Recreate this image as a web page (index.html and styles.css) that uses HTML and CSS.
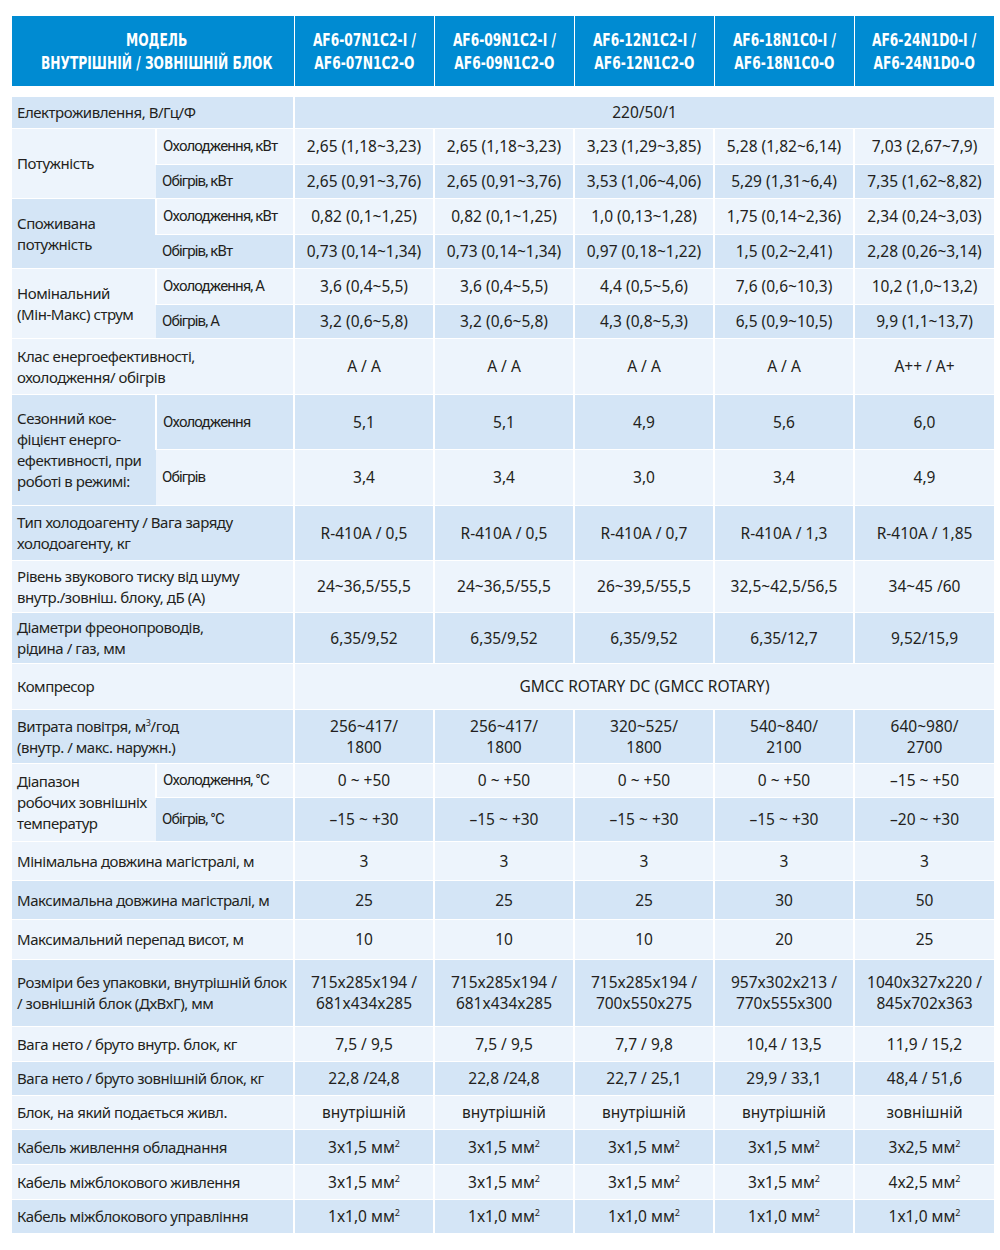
FILE: index.html
```html
<!DOCTYPE html>
<html lang="uk">
<head>
<meta charset="utf-8">
<title>Специфікація</title>
<link rel="stylesheet" href="styles.css">
</head>
<body>
<div class="wrap">
<table class="spec head">
  <colgroup><col class="c1"><col class="c2"><col class="cm"><col class="cm"><col class="cm"><col class="cm"><col class="cm"></colgroup>
  <tr class="hrow">
    <th colspan="2"><span class="hx">МОДЕЛЬ<br>ВНУТРІШНІЙ / ЗОВНІШНІЙ БЛОК</span></th>
    <th><span class="hx">AF6-07N1C2-I /<br>AF6-07N1C2-O</span></th>
    <th><span class="hx">AF6-09N1C2-I /<br>AF6-09N1C2-O</span></th>
    <th><span class="hx">AF6-12N1C2-I /<br>AF6-12N1C2-O</span></th>
    <th><span class="hx">AF6-18N1C0-I /<br>AF6-18N1C0-O</span></th>
    <th><span class="hx">AF6-24N1D0-I /<br>AF6-24N1D0-O</span></th>
  </tr>
</table>
<table class="spec body">
  <colgroup><col class="c1"><col class="c2"><col class="cm"><col class="cm"><col class="cm"><col class="cm"><col class="cm"></colgroup>
  <tr class="d h31"><td class="lab" colspan="2">Електроживлення, В/Гц/Ф</td><td colspan="5">220/50/1</td></tr>

  <tr class="l h36"><td class="lab l" rowspan="2">Потужність</td><td class="sub">Охолодження, кВт</td><td>2,65 (1,18~3,23)</td><td>2,65 (1,18~3,23)</td><td>3,23 (1,29~3,85)</td><td>5,28 (1,82~6,14)</td><td>7,03 (2,67~7,9)</td></tr>
  <tr class="d h34"><td class="sub">Обігрів, кВт</td><td>2,65 (0,91~3,76)</td><td>2,65 (0,91~3,76)</td><td>3,53 (1,06~4,06)</td><td>5,29 (1,31~6,4)</td><td>7,35 (1,62~8,82)</td></tr>

  <tr class="l h36"><td class="lab d" rowspan="2">Споживана<br>потужність</td><td class="sub">Охолодження, кВт</td><td>0,82 (0,1~1,25)</td><td>0,82 (0,1~1,25)</td><td>1,0 (0,13~1,28)</td><td>1,75 (0,14~2,36)</td><td>2,34 (0,24~3,03)</td></tr>
  <tr class="d h34"><td class="sub">Обігрів, кВт</td><td>0,73 (0,14~1,34)</td><td>0,73 (0,14~1,34)</td><td>0,97 (0,18~1,22)</td><td>1,5 (0,2~2,41)</td><td>2,28 (0,26~3,14)</td></tr>

  <tr class="l h36"><td class="lab l" rowspan="2">Номінальний<br>(Мін-Макс) струм</td><td class="sub">Охолодження, А</td><td>3,6 (0,4~5,5)</td><td>3,6 (0,4~5,5)</td><td>4,4 (0,5~5,6)</td><td>7,6 (0,6~10,3)</td><td>10,2 (1,0~13,2)</td></tr>
  <tr class="d h34"><td class="sub">Обігрів, А</td><td>3,2 (0,6~5,8)</td><td>3,2 (0,6~5,8)</td><td>4,3 (0,8~5,3)</td><td>6,5 (0,9~10,5)</td><td>9,9 (1,1~13,7)</td></tr>

  <tr class="l h56"><td class="lab" colspan="2">Клас енергоефективності,<br>охолодження/ обігрів</td><td>A / A</td><td>A / A</td><td>A / A</td><td>A / A</td><td>A++ / A+</td></tr>

  <tr class="d h55"><td class="lab d" rowspan="2">Сезонний кое-<br>фіцієнт енерго-<br>ефективності, при<br>роботі в режимі:</td><td class="sub">Охолодження</td><td>5,1</td><td>5,1</td><td>4,9</td><td>5,6</td><td>6,0</td></tr>
  <tr class="l h56"><td class="sub">Обігрів</td><td>3,4</td><td>3,4</td><td>3,0</td><td>3,4</td><td>4,9</td></tr>

  <tr class="d h55"><td class="lab" colspan="2">Тип холодоагенту / Вага заряду<br>холодоагенту, кг</td><td>R-410A / 0,5</td><td>R-410A / 0,5</td><td>R-410A / 0,7</td><td>R-410A / 1,3</td><td>R-410A / 1,85</td></tr>

  <tr class="l h52"><td class="lab" colspan="2">Рівень звукового тиску від шуму<br>внутр./зовніш. блоку, дБ (А)</td><td>24~36,5/55,5</td><td>24~36,5/55,5</td><td>26~39,5/55,5</td><td>32,5~42,5/56,5</td><td>34~45 /60</td></tr>

  <tr class="d h51"><td class="lab" colspan="2">Діаметри фреонопроводів,<br>рідина / газ, мм</td><td>6,35/9,52</td><td>6,35/9,52</td><td>6,35/9,52</td><td>6,35/12,7</td><td>9,52/15,9</td></tr>

  <tr class="l h46"><td class="lab" colspan="2">Компресор</td><td colspan="5">GMCC ROTARY DC (GMCC ROTARY)</td></tr>

  <tr class="d h54"><td class="lab" colspan="2">Витрата повітря, м<sup>3</sup>/год<br>(внутр. / макс. наружн.)</td><td>256~417/<br>1800</td><td>256~417/<br>1800</td><td>320~525/<br>1800</td><td>540~840/<br>2100</td><td>640~980/<br>2700</td></tr>

  <tr class="l h34"><td class="lab l" rowspan="2">Діапазон<br>робочих зовнішніх<br>температур</td><td class="sub">Охолодження, °С</td><td>0 ~ +50</td><td>0 ~ +50</td><td>0 ~ +50</td><td>0 ~ +50</td><td>–15 ~ +50</td></tr>
  <tr class="d h44"><td class="sub">Обігрів, °С</td><td>–15 ~ +30</td><td>–15 ~ +30</td><td>–15 ~ +30</td><td>–15 ~ +30</td><td>–20 ~ +30</td></tr>

  <tr class="l h39"><td class="lab" colspan="2">Мінімальна довжина магістралі, м</td><td>3</td><td>3</td><td>3</td><td>3</td><td>3</td></tr>
  <tr class="d h39"><td class="lab" colspan="2">Максимальна довжина магістралі, м</td><td>25</td><td>25</td><td>25</td><td>30</td><td>50</td></tr>
  <tr class="l h40"><td class="lab" colspan="2">Максимальний перепад висот, м</td><td>10</td><td>10</td><td>10</td><td>20</td><td>25</td></tr>

  <tr class="d h67"><td class="lab" colspan="2">Розміри без упаковки, внутрішній блок<br>/ зовнішній блок (ДхВхГ), мм</td><td>715x285x194 /<br>681x434x285</td><td>715x285x194 /<br>681x434x285</td><td>715x285x194 /<br>700x550x275</td><td>957x302x213 /<br>770x555x300</td><td>1040x327x220 /<br>845x702x363</td></tr>

  <tr class="l h35"><td class="lab" colspan="2">Вага нето / бруто внутр. блок, кг</td><td>7,5 / 9,5</td><td>7,5 / 9,5</td><td>7,7 / 9,8</td><td>10,4 / 13,5</td><td>11,9 / 15,2</td></tr>
  <tr class="d h34"><td class="lab" colspan="2">Вага нето / бруто зовнішній блок, кг</td><td>22,8 /24,8</td><td>22,8 /24,8</td><td>22,7 / 25,1</td><td>29,9 / 33,1</td><td>48,4 / 51,6</td></tr>
  <tr class="l h34"><td class="lab" colspan="2">Блок, на який подається живл.</td><td>внутрішній</td><td>внутрішній</td><td>внутрішній</td><td>внутрішній</td><td>зовнішній</td></tr>
  <tr class="d h35"><td class="lab" colspan="2">Кабель живлення обладнання</td><td>3x1,5 мм<sup>2</sup></td><td>3x1,5 мм<sup>2</sup></td><td>3x1,5 мм<sup>2</sup></td><td>3x1,5 мм<sup>2</sup></td><td>3x2,5 мм<sup>2</sup></td></tr>
  <tr class="l h35"><td class="lab" colspan="2">Кабель міжблокового живлення</td><td>3x1,5 мм<sup>2</sup></td><td>3x1,5 мм<sup>2</sup></td><td>3x1,5 мм<sup>2</sup></td><td>3x1,5 мм<sup>2</sup></td><td>4x2,5 мм<sup>2</sup></td></tr>
  <tr class="d h34"><td class="lab" colspan="2">Кабель міжблокового управління</td><td>1x1,0 мм<sup>2</sup></td><td>1x1,0 мм<sup>2</sup></td><td>1x1,0 мм<sup>2</sup></td><td>1x1,0 мм<sup>2</sup></td><td>1x1,0 мм<sup>2</sup></td></tr>
</table>
</div>
</body>
</html>
```

FILE: styles.css
```css
html, body {
  margin: 0;
  padding: 0;
  background: #ffffff;
}
body {
  font-family: "Noto Sans", "Open Sans", sans-serif;
  color: #231f20;
}
.wrap {
  padding: 16px 7px 0 12px;
  width: 981px;
}
.spec {
  width: 981px;
  table-layout: fixed;
  border-collapse: collapse;
}
.spec col.c1 { width: 144px; }
.spec col.c2 { width: 138px; }
.spec col.cm { width: 140px; }

.head {
  margin-bottom: 11px;
}
.hrow {
  height: 70px;
}
.hrow th {
  background: #008bd2;
  color: #ffffff;
  font-family: "DejaVu Sans", sans-serif;
  font-stretch: condensed;
  font-weight: bold;
  font-size: 17px;
  line-height: 23px;
  text-align: center;
  vertical-align: middle;
  border-left: 1px solid #ffffff;
  padding: 2px 0 0 0;
  white-space: nowrap;
}
.hrow th:first-child {
  border-left: 0;
}
.hx {
  display: inline-block;
  transform: scaleX(0.8);
  transform-origin: center;
}

.body td {
  font-size: 15.5px;
  line-height: 21px;
  text-align: center;
  vertical-align: middle;
  padding: 1px 2px 0 2px;
  border-left: 2px solid #ffffff;
  border-top: 1px solid #ffffff;
  white-space: nowrap;
}
.body td:first-child {
  border-left: 0;
}
.body tr:first-child td {
  border-top: 0;
}
.body tr.d td { background: #d4e5f6; }
.body tr.l td { background: #edf4fc; }
.body tr td.lab.l { background: #edf4fc; }
.body tr td.lab.d { background: #d4e5f6; }

.body td.lab {
  font-size: 15px;
  text-align: left;
  padding-left: 5px;
  letter-spacing: -0.45px;
}
.body td.sub {
  font-family: Roboto, "Noto Sans", sans-serif;
  font-size: 15px;
  text-align: left;
  padding-left: 6px;
  letter-spacing: -0.85px;
}
.body sup {
  font-size: 9px;
  line-height: 0;
  vertical-align: 6px;
}

.h31 { height: 31px; }
.h34 { height: 34px; }
.h35 { height: 35px; }
.h36 { height: 36px; }
.h39 { height: 39px; }
.h40 { height: 40px; }
.h44 { height: 44px; }
.h46 { height: 46px; }
.h51 { height: 51px; }
.h52 { height: 52px; }
.h54 { height: 54px; }
.h55 { height: 55px; }
.h56 { height: 56px; }
.h67 { height: 67px; }
```
